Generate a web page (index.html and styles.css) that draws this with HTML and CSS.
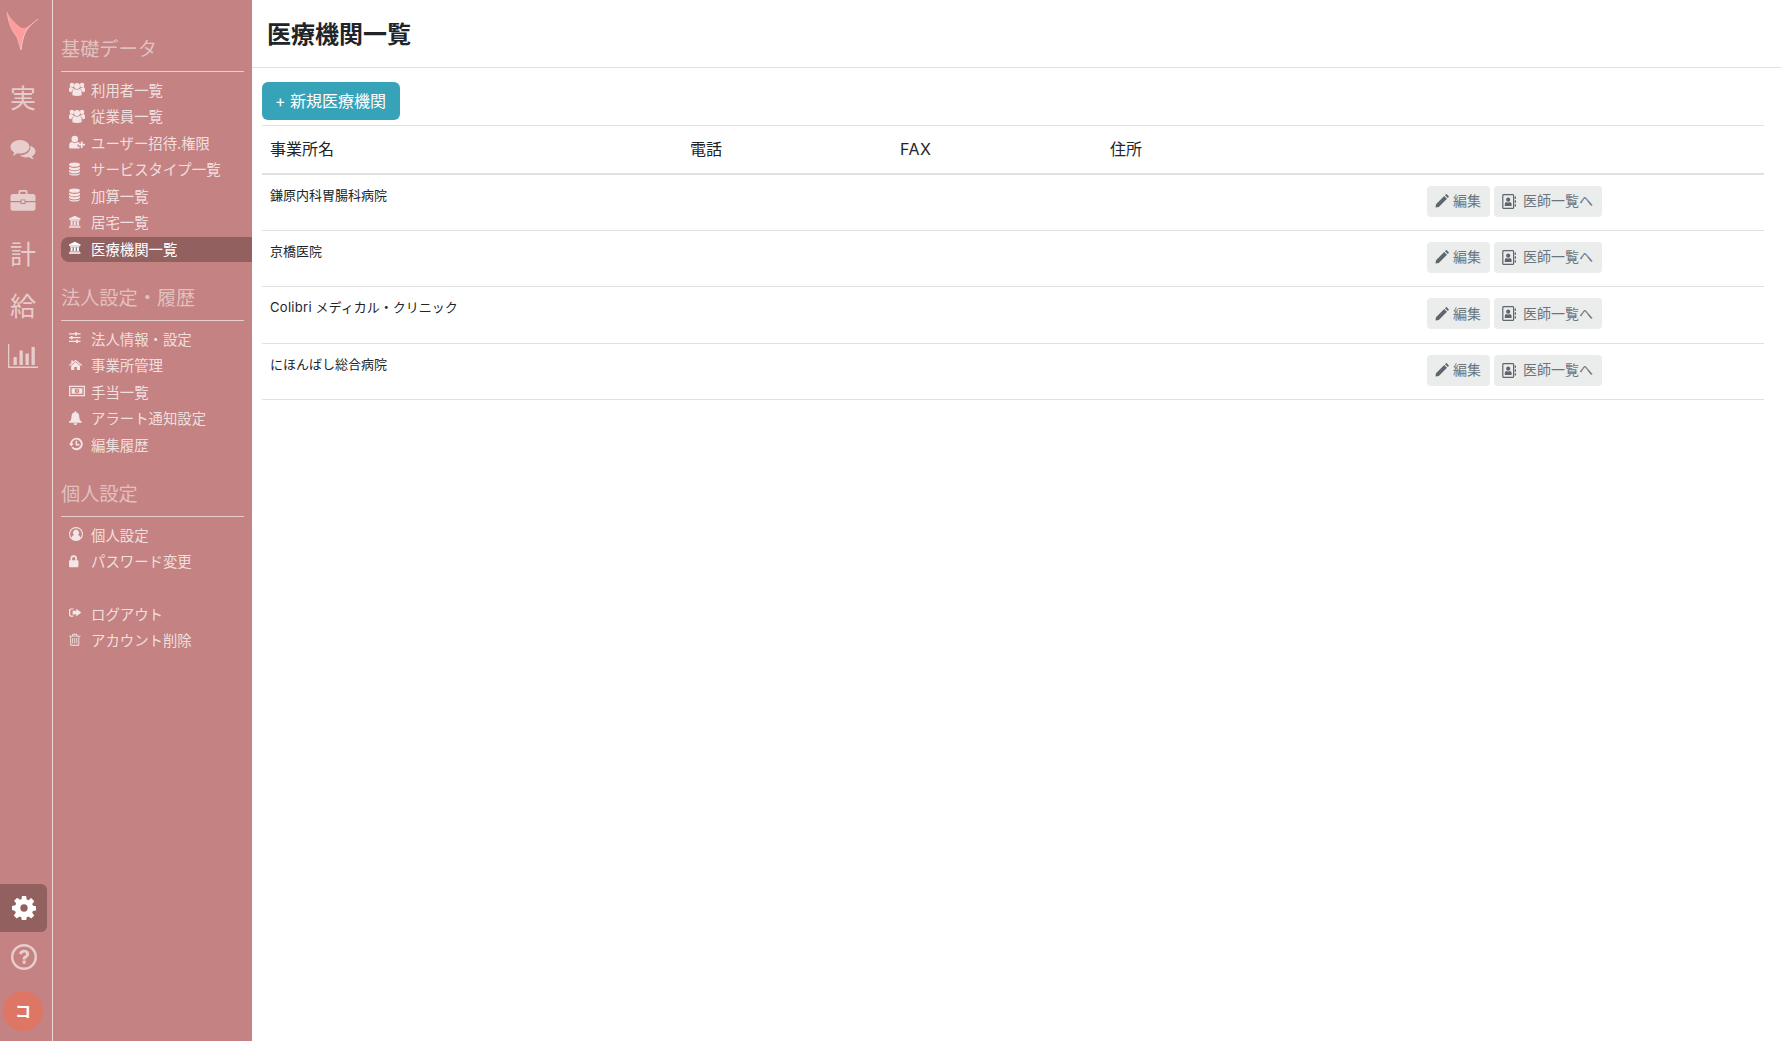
FILE: index.html
```html
<!DOCTYPE html>
<html lang="ja">
<head>
    <meta charset="UTF-8">
    <meta name="viewport" content="width=device-width, initial-scale=1.0">
    <title>医療機関一覧</title>
    <link rel="stylesheet" href="styles.css">
</head>
<body>
<svg class="icon-defs" aria-hidden="true">
  <defs>
    <symbol id="i-users" viewBox="0 0 16 16"><circle cx="8" cy="5" r="3"/><circle cx="2.900" cy="4" r="2.200"/><circle cx="13.100" cy="4" r="2.200"/><path d="M3.400 14.200v-3.400c0-1.800 1.300-2.700 2.400-2.700q2.200 1.200 4.400 0c1.100 0 2.400.9 2.400 2.700v3.400q-4.600 1.400-9.200 0z"/><path d="M0 10.200V8.200c0-1.400 1-2.100 1.900-2.100q1.200.8 2.200.4.300 1 1 1.600c-1.500.5-2.500 1.600-2.600 3.100Q.9 11.100 0 10.200zM16 10.200V8.200c0-1.400-1-2.100-1.900-2.100q-1.200.8-2.200.4-.3 1-1 1.600c1.500.5 2.500 1.600 2.600 3.100q1.600-.1 2.500-1z"/></symbol>
    <symbol id="i-user-plus" viewBox="0 0 16 16"><circle cx="5.800" cy="5" r="3.300"/><path d="M.2 13.800v-2.600c0-2 1.400-3.100 2.700-3.100q2.900 1.800 5.800 0c.7 0 1.400.3 1.900.7v1.400H8.600v2.600h2v1.800H1.800c-1 0-1.600-.3-1.600-.8z"/><path d="M11.800 7.400h1.800v2.400H16v1.800h-2.400V14h-1.800v-2.400H9.600V9.800h2.200z"/></symbol>
    <symbol id="i-database" viewBox="1.700 0 16 16"><ellipse cx="8" cy="3" rx="6.300" ry="2.500"/><path d="M1.700 5.200V7c0 1.400 2.800 2.400 6.300 2.400s6.300-1 6.300-2.400V5.200C13 6.400 10.500 6.800 8 6.800S3 6.400 1.700 5.200zM1.700 8.900v1.800c0 1.400 2.800 2.400 6.300 2.400s6.300-1 6.300-2.400V8.900c-1.300 1.200-3.800 1.600-6.300 1.600S3 10.100 1.700 8.900z"/><path d="M1.700 12.500v.6c0 1.400 2.800 2.400 6.300 2.400s6.300-1 6.300-2.400v-.6c-1.300 1.200-3.800 1.600-6.300 1.600s-5-.4-6.300-1.600z"/></symbol>
    <symbol id="i-bank" viewBox="1 0 17 17"><path d="M8 1l7 3.400v1.300H1V4.400z"/><path d="M2.200 6.500h11.600v1H2.200zM3 8h2.400v4.200H3zM6.800 8h2.400v4.200H6.800zM10.600 8H13v4.200h-2.400zM1.800 12.600h12.400v1.100H1.800zM1 14.100h14v1.300H1z"/></symbol>
    <symbol id="i-sliders" viewBox="1 0 17 17"><path d="M1 2.800h7.300V1.600h2.400v1.200H15v1.500h-4.300v1.200H8.300V4.300H1zM1 7.300h2V6.100h2.400v1.200H15v1.500H5.400V10H3V8.800H1zM1 11.800h8.600v-1.200H12v1.200h3v1.500h-3v1.200H9.600v-1.200H1z"/></symbol>
    <symbol id="i-home" viewBox="0 0 17 17"><path d="M8 2l8 6.600-.9 1L8 3.800.9 9.600l-.9-1 2.800-2.300V3h2v1.700z"/><path d="M8 5l5.400 4.400V14.500H9.600V11H6.400v3.500H2.600V9.400z"/></symbol>
    <symbol id="i-money" viewBox="0 0 16 16"><path fill-rule="evenodd" d="M0 2.700h16v10.600H0zM1.300 4v8h13.400V4z"/><path fill-rule="evenodd" d="M2.600 5.200h10.800v5.600H2.600zM8 5.700a2.300 2.300 0 100 4.600 2.300 2.300 0 000-4.600z"/><path d="M7.700 6.600h.9v2.800h-.9z"/></symbol>
    <symbol id="i-bell" viewBox="0.700 0 16 16"><path d="M7.200.2h1.600v1.200c2.200.4 3.500 2.100 3.600 4.500.1 3.200.9 5 2.900 6.500v1.100H.7v-1.100c2-1.500 2.800-3.300 2.900-6.500.1-2.400 1.400-4.100 3.600-4.500z"/><path d="M6 14.100h4a2 2 0 01-4 0z"/></symbol>
    <symbol id="i-history" viewBox="0 0 16 16"><path d="M8.600.9a7.100 7.100 0 11-5.600 11.500l1.500-1.300a5.100 5.100 0 10-1.100-3.800h2.100L2.600 10.900 0 7.300h1.500A7.100 7.100 0 018.600.9z"/><path d="M7.600 4.400h1.700v3.600h2.600v1.700H7.600z"/></symbol>
    <symbol id="i-user-circle" viewBox="0 0 16 16"><path fill-rule="evenodd" d="M8 0a8 8 0 100 16A8 8 0 008 0zM8 1.400a6.600 6.600 0 015.100 10.800c-.5-1.700-1.600-2.700-2.900-3a3.400 3.400 0 10-4.400 0c-1.300.3-2.400 1.300-2.900 3A6.600 6.600 0 018 1.400z"/></symbol>
    <symbol id="i-lock" viewBox="2.600 0 16 16"><path fill-rule="evenodd" d="M4.300 7V5.100a3.700 3.700 0 017.400 0V7h.7c.6 0 1 .4 1 1v6c0 .6-.4 1-1 1H3.600c-.6 0-1-.4-1-1V8c0-.6.4-1 1-1zM6.200 7h3.600V5.100a1.800 1.800 0 00-3.600 0z"/></symbol>
    <symbol id="i-sign-out" viewBox="0.600 0 17 17"><path d="M6 3v1.400H3.200c-.6 0-1 .4-1 1v5.200c0 .6.4 1 1 1H6V13H3c-1.500 0-2.400-.9-2.400-2.300V5.300C.6 3.900 1.500 3 3 3z"/><path d="M9.500 3.200L15.500 8l-6 4.800V10.200H5V5.800h4.500z"/></symbol>
    <symbol id="i-trash" viewBox="1 0 17 17"><path fill-rule="evenodd" d="M5.500 1h5l1 2.200H15v1.100h-1.500V14c0 .9-.6 1.500-1.300 1.500H3.800c-.7 0-1.300-.6-1.300-1.500V4.300H1V3.200h3.500zM6 3.200h4l-.4-1H6.400zM3.600 4.300V14c0 .3.100.4.200.4h8.400c.1 0 .2-.1.200-.4V4.300z"/><path d="M5 6h1v6.800H5zM7.500 6h1v6.800h-1zM10 6h1v6.800h-1z"/></symbol>
    <symbol id="i-comments" viewBox="0 0 26 22"><path d="M10 1c5.300 0 9.500 3 9.500 6.800S15.300 14.600 10 14.600c-.9 0-1.800-.1-2.600-.3C6 15.500 4.300 16.300 2.500 16.700c.8-1 1.400-2 1.700-3.300C1.800 12.100.5 10.100.5 7.800.5 4 4.700 1 10 1z"/><path d="M21 6.900c2.700 1.100 4.500 3.100 4.500 5.400 0 2-1.300 3.800-3.400 5 .3 1.200.9 2.200 1.700 3.200-1.800-.4-3.500-1.200-4.900-2.400-.8.200-1.700.3-2.600.3-2.600 0-5-.9-6.500-2.200 6.400.2 11.100-3.700 10.700-9.300z"/></symbol>
    <symbol id="i-pencil" viewBox="0 0 14 14"><path d="M1 10.200L9.200 2 12 4.800 3.800 13 .5 13.500zM10 1.200l.7-.7c.4-.4 1-.4 1.400 0l1.400 1.400c.4.4.4 1 0 1.400l-.7.7z"/></symbol>
    <symbol id="i-book" viewBox="0 0 14 15"><path fill-rule="evenodd" d="M1.700 0h9c.9 0 1.500.6 1.500 1.500v12c0 .9-.6 1.500-1.500 1.500h-9C.8 15 .2 14.400.2 13.500v-12C.2.6.8 0 1.700 0zM1.700 1.200c-.2 0-.3.1-.3.3v12c0 .2.1.3.3.3h9c.2 0 .3-.1.300-.3v-12c0-.2-.1-.3-.3-.3z"/><circle cx="6.200" cy="5.700" r="2.100"/><path d="M2.800 11.900v-1.800c0-1.300 1-2.200 1.800-2.200q1.600 1 3.200 0c.8 0 1.800.9 1.800 2.200v1.800zM12.700 2.400H14v2.400h-1.300zM12.700 6.300H14v2.400h-1.300zM12.700 10.200H14v2.400h-1.300z"/></symbol>
  </defs>
</svg>

<aside class="rail">
  <div class="rail-top">
    <!-- logo: a small bird, tail down -->
    <svg class="logo" viewBox="0 0 40 52">
      <path d="M7 12C8 21 11 30 17 37L21 50C22 43 23 37 26 31 29 27 33 23 38 19 33 23 29 26 25 28 23 28 21 28 20 27 15 23 10 18 7 12z" fill="#ff9c9c"/>
      <path d="M38 19C33 23 29 26 26 31 23 37 22 43 21 50" fill="none" stroke="#fbe3e3" stroke-width=".8" opacity=".8"/>
      <path d="M7 12C8 21 11 30 17 37L21 50" fill="none" stroke="#fbe3e3" stroke-width=".6" opacity=".7"/>
    </svg>
    <a class="rail-link rail-kanji">実</a>
    <a class="rail-link"><svg class="rail-icon"><use href="#i-comments"/></svg></a>
    <a class="rail-link rail-case">
      <svg class="rail-icon" viewBox="0 0 26 22"><path fill-rule="evenodd" d="M8.500 5V2.800C8.500 1.800 9.300 1 10.300 1h5.400c1 0 1.800.8 1.800 1.800V5h5.700c1.200 0 2.300 1 2.300 2.300V12H15.500v-1.600h-5V12H.5V7.300C.5 6 1.600 5 2.800 5zM10.300 2.800V5h5.400V2.800z"/><path d="M.5 13.300h10V15h5v-1.700h10v6.200c0 1.300-1 2.300-2.300 2.300H2.800c-1.300 0-2.300-1-2.300-2.300zM11.500 11.300h3v2.700h-3z"/></svg>
    </a>
    <a class="rail-link rail-kanji">計</a>
    <a class="rail-link rail-kanji rail-pay">給</a>
    <a class="rail-link">
      <svg class="rail-icon rail-icon-chart" viewBox="0 0 30 24"><path d="M0 0h1.300v22.600H30V24H0z"/><path d="M5.500 13h3.300v8H5.500zM11.500 6.500h3.300V21h-3.300zM17.500 9.500h3.300V21h-3.300zM23.500 3h3.300v18h-3.300z"/></svg>
    </a>
  </div>
  <div class="rail-bottom">
    <a class="rail-gear">
      <svg viewBox="-1 -1 26 26"><path fill-rule="evenodd" d="M9.700-1h4.600l.6 3.700 1.900.8 3-2.200 3.300 3.300-2.200 3 .8 1.900 3.700.6v4.600l-3.700.6-.8 1.900 2.200 3-3.300 3.300-3-2.200-1.900.8-.6 3.700H9.700l-.6-3.700-1.900-.8-3 2.200-3.300-3.300 2.200-3-.8-1.900L-1 14.300V9.700l3.700-.6.8-1.900-2.200-3 3.300-3.300 3 2.200 1.900-.8zM12 8a4 4 0 100 8 4 4 0 000-8z"/></svg>
    </a>
    <a class="rail-help">
      <svg viewBox="0 0 26 26"><circle cx="13" cy="13" r="11.800" fill="none" stroke="currentColor" stroke-width="2.400"/><path d="M8 9.800C8.500 7.300 10.500 5.800 13.200 5.800c2.900 0 5 1.700 5 4.200 0 1.900-1 2.800-2.400 3.700-.9.600-1.100 1-1.100 1.800h-3.100c0-1.900.5-2.700 2-3.700.9-.6 1.400-1 1.400-1.700 0-.9-.8-1.500-1.800-1.500-1.100 0-1.800.7-2.100 1.800zM11.600 16.600h3.100v3.100h-3.100z" fill="currentColor"/></svg>
    </a>
    <div class="avatar">コ</div>
  </div>
</aside>

<nav class="sidebar">
  <h2 class="nav-title">基礎データ</h2>
  <ul class="nav-list">
    <li><a><svg class="wide"><use href="#i-users"/></svg>利用者一覧</a></li>
    <li><a><svg class="wide"><use href="#i-users"/></svg>従業員一覧</a></li>
    <li><a><svg class="wide"><use href="#i-user-plus"/></svg>ユーザー招待.権限</a></li>
    <li><a><svg><use href="#i-database"/></svg>サービスタイプ一覧</a></li>
    <li><a><svg><use href="#i-database"/></svg>加算一覧</a></li>
    <li><a><svg><use href="#i-bank"/></svg>居宅一覧</a></li>
    <li><a class="active"><svg><use href="#i-bank"/></svg>医療機関一覧</a></li>
  </ul>
  <h2 class="nav-title">法人設定・履歴</h2>
  <ul class="nav-list">
    <li><a><svg><use href="#i-sliders"/></svg>法人情報・設定</a></li>
    <li><a><svg><use href="#i-home"/></svg>事業所管理</a></li>
    <li><a><svg class="wide"><use href="#i-money"/></svg>手当一覧</a></li>
    <li><a><svg><use href="#i-bell"/></svg>アラート通知設定</a></li>
    <li><a><svg><use href="#i-history"/></svg>編集履歴</a></li>
  </ul>
  <h2 class="nav-title">個人設定</h2>
  <ul class="nav-list">
    <li><a><svg><use href="#i-user-circle"/></svg>個人設定</a></li>
    <li><a><svg><use href="#i-lock"/></svg>パスワード変更</a></li>
  </ul>
  <ul class="nav-list nav-account">
    <li><a><svg><use href="#i-sign-out"/></svg>ログアウト</a></li>
    <li><a><svg><use href="#i-trash"/></svg>アカウント削除</a></li>
  </ul>
</nav>

<main class="main">
  <header class="page-header">
    <h1>医療機関一覧</h1>
  </header>
  <div class="content">
    <button class="btn-new">+ 新規医療機関</button>
    <table class="offices">
      <thead>
        <tr><th class="col-name">事業所名</th><th class="col-tel">電話</th><th class="col-fax">FAX</th><th class="col-addr">住所</th><th></th></tr>
      </thead>
      <tbody>
        <tr><td>鎌原内科胃腸科病院</td><td></td><td></td><td></td><td class="actions"><a class="btn-sm"><svg class="ico-edit"><use href="#i-pencil"/></svg>編集</a><a class="btn-sm"><svg class="ico-book"><use href="#i-book"/></svg>医師一覧へ</a></td></tr>
        <tr><td>京橋医院</td><td></td><td></td><td></td><td class="actions"><a class="btn-sm"><svg class="ico-edit"><use href="#i-pencil"/></svg>編集</a><a class="btn-sm"><svg class="ico-book"><use href="#i-book"/></svg>医師一覧へ</a></td></tr>
        <tr><td><span class="latin">Colibri</span> メディカル・クリニック</td><td></td><td></td><td></td><td class="actions"><a class="btn-sm"><svg class="ico-edit"><use href="#i-pencil"/></svg>編集</a><a class="btn-sm"><svg class="ico-book"><use href="#i-book"/></svg>医師一覧へ</a></td></tr>
        <tr><td>にほんばし総合病院</td><td></td><td></td><td></td><td class="actions"><a class="btn-sm"><svg class="ico-edit"><use href="#i-pencil"/></svg>編集</a><a class="btn-sm"><svg class="ico-book"><use href="#i-book"/></svg>医師一覧へ</a></td></tr>
      </tbody>
    </table>
  </div>
</main>
</body>
</html>
```

FILE: styles.css
```css
* {
  box-sizing: border-box;
}

body {
  margin: 0;
  display: flex;
  height: 1041px;
  overflow: hidden;
  font-family: Inter, "Noto Sans CJK JP", sans-serif;
  color: #212529;
  background-color: #fff;
}

.icon-defs {
  display: none;
}

/* Left icon rail */
.rail {
  width: 53px;
  flex-shrink: 0;
  display: flex;
  flex-direction: column;
  justify-content: space-between;
  background-color: #c58282;
  border-right: 1px solid #eed9d9;
}

.rail-top {
  display: flex;
  flex-direction: column;
}

.logo {
  display: block;
  width: 40px;
  height: 52px;
  margin-bottom: 21px;
}

.rail-link {
  display: flex;
  align-items: center;
  justify-content: center;
  height: 51.5px;
  width: 46px;
  color: rgba(255, 255, 255, 0.6);
  fill: rgba(255, 255, 255, 0.6);
}

.rail-case {
  margin: -2px 0 4px;
}

.rail-pay {
  margin-bottom: -2px;
}

.rail-kanji {
  font-size: 26px;
  line-height: 50px;
}

.rail-icon {
  width: 26px;
  height: 22px;
}

.rail-icon-chart {
  width: 30px;
  height: 24px;
}

.rail-bottom {
  display: flex;
  flex-direction: column;
  align-items: flex-start;
}

.rail-gear {
  width: 47px;
  height: 48px;
  display: flex;
  align-items: center;
  justify-content: center;
  background-color: #936060;
  border-radius: 0 6px 6px 0;
  fill: #fff;
}

.rail-gear svg {
  width: 24px;
  height: 24px;
}

.rail-help {
  width: 47px;
  height: 50px;
  display: flex;
  align-items: center;
  justify-content: center;
  color: rgba(255, 255, 255, 0.6);
}

.rail-help svg {
  width: 26px;
  height: 26px;
}

.avatar {
  width: 40px;
  height: 40px;
  margin: 9px 0 10px 3px;
  border-radius: 50%;
  background-color: #de7666;
  color: #fff;
  font-size: 16px;
  font-weight: bold;
  line-height: 40px;
  text-align: center;
}

/* Menu column */
.sidebar {
  width: 199px;
  flex-shrink: 0;
  padding: 33px 0 0 8px;
  background-color: #c58282;
}

.nav-title {
  height: 39px;
  margin: 0 8px 0 0;
  padding: 2px 0 7px;
  font-size: 19.2px;
  font-weight: normal;
  line-height: 29px;
  color: rgba(255, 255, 255, 0.5);
  border-bottom: 1px solid rgba(255, 255, 255, 0.6);
}

.nav-list {
  list-style: none;
  margin: 5px 0 19.5px;
  padding: 0;
}

.nav-list li {
  display: flex;
  align-items: center;
  height: 26.5px;
}

.nav-list a {
  flex: 1;
  display: flex;
  align-items: center;
  height: 25px;
  padding: 0 0 2px 8px;
  font-size: 14.4px;
  color: rgba(255, 255, 255, 0.75);
  fill: rgba(255, 255, 255, 0.8);
}

.nav-list a.active {
  color: #fff;
  fill: #fff;
  background-color: #936060;
  border-radius: 8px 0 0 8px;
}

.nav-list svg {
  width: 14px;
  height: 14px;
  margin-right: 8px;
  flex-shrink: 0;
}

.nav-list svg.wide {
  width: 16px;
  height: 16px;
  margin-right: 6px;
}

.nav-account {
  margin-top: 26px;
}

/* Main area */
.main {
  flex: 1;
  min-width: 0;
}

.page-header {
  height: 68px;
  padding: 0 15px;
  border-bottom: 1px solid #dee2e6;
}

.page-header h1 {
  margin: 0;
  font-size: 24px;
  font-weight: bold;
  line-height: 69px;
}

.content {
  padding: 14px 17px 0 10px;
}

.btn-new {
  display: block;
  height: 38px;
  padding: 0 14px 0 13px;
  font-family: inherit;
  font-size: 16px;
  line-height: 38px;
  color: #fff;
  background-color: #36a3b8;
  border: none;
  border-radius: 6px;
}

.offices {
  width: 100%;
  margin-top: 5px;
  border-collapse: collapse;
  table-layout: fixed;
}

.offices th {
  height: 48px;
  padding: 0 8px 2px;
  font-size: 16px;
  font-weight: normal;
  text-align: left;
  color: #212529;
  border-top: 1px solid #dee2e6;
  border-bottom: 2px solid #dee2e6;
}

.col-name {
  width: 420px;
}

.col-tel {
  width: 210px;
}

.offices .col-fax {
  width: 210px;
  padding-top: 2px;
  letter-spacing: 0.5px;
}

.col-addr {
  width: 317px;
}

.offices td {
  height: 56.5px;
  padding: 11px 8px 0;
  font-size: 13px;
  line-height: 18px;
  vertical-align: top;
  color: #212529;
  border-bottom: 1px solid #dee2e6;
}

.latin {
  letter-spacing: 0.3px;
}

.offices td.actions {
  padding-top: 11px;
}

.btn-sm {
  display: inline-flex;
  align-items: center;
  height: 31px;
  margin-right: 4px;
  padding: 0 9px 0 8px;
  font-size: 14px;
  color: #6c757d;
  fill: #5f666d;
  background-color: #ebeded;
  border-radius: 4px;
  vertical-align: top;
}

.ico-edit {
  width: 14px;
  height: 14px;
  margin-right: 4px;
}

.ico-book {
  width: 14px;
  height: 15px;
  margin-right: 7px;
}
```
